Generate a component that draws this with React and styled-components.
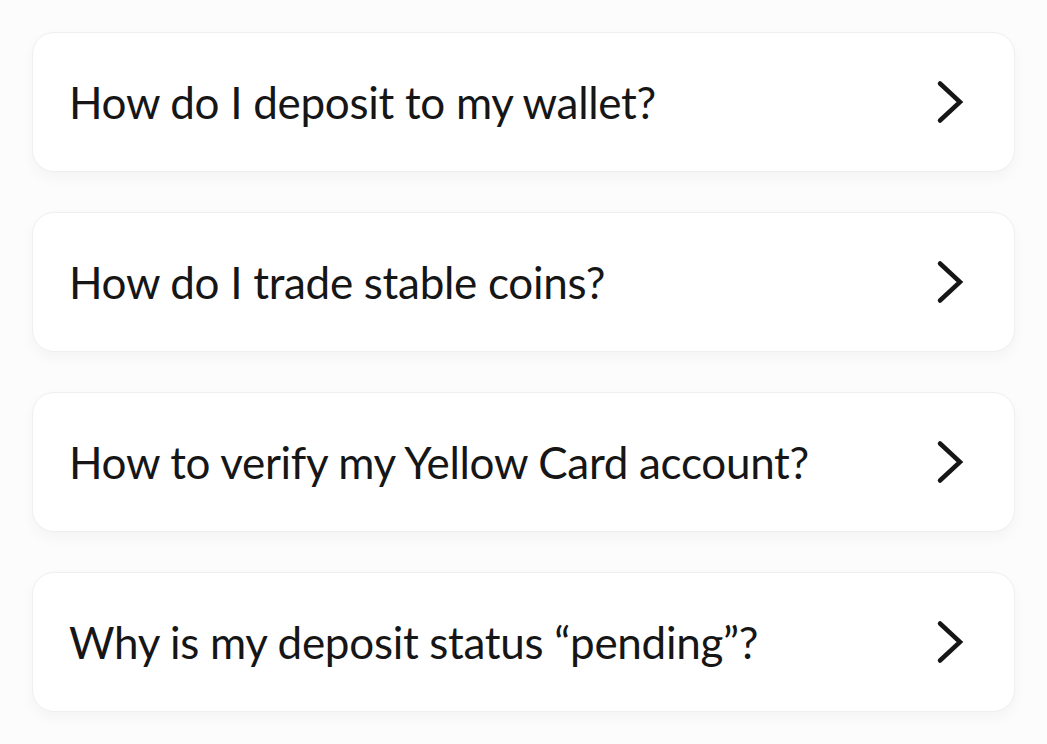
import React from "react";
import styled, { createGlobalStyle } from "styled-components";

const Global = createGlobalStyle`
  html, body { margin: 0; padding: 0; background: #fcfcfc; }
  body { font-family: "Lato", "Noto Sans", sans-serif; }
`;

const List = styled.div`
  display: flex;
  flex-direction: column;
  gap: 40px;
  padding: 32px 32px;
`;

const Card = styled.button`
  all: unset;
  box-sizing: border-box;
  display: flex;
  align-items: center;
  justify-content: space-between;
  height: 140px;
  padding: 0 48px 0 36px;
  background: #ffffff;
  border: 1.5px solid #efefef;
  border-radius: 22px;
  box-shadow: 0 6px 14px rgba(0, 0, 0, 0.035);
  cursor: pointer;
`;

const Question = styled.span`
  font-family: "Lato", "Noto Sans", sans-serif;
  font-size: 44px;
  font-weight: 400;
  color: #161616;
  letter-spacing: -0.3px;
`;

const Chevron = () => (
  <svg width="32" height="46" viewBox="0 0 32 46" fill="none">
    <path d="M6 4.5 L26 23 L6 41.5" stroke="#161616" strokeWidth="4.5" strokeLinecap="round" strokeLinejoin="miter" />
  </svg>
);

const questions = [
  "How do I deposit to my wallet?",
  "How do I trade stable coins?",
  "How to verify my Yellow Card account?",
  "Why is my deposit status \u201cpending\u201d?",
];

export default function App() {
  return (
    <>
      <Global />
      <List>
        {questions.map((q) => (
          <Card key={q}>
            <Question>{q}</Question>
            <Chevron />
          </Card>
        ))}
      </List>
    </>
  );
}
